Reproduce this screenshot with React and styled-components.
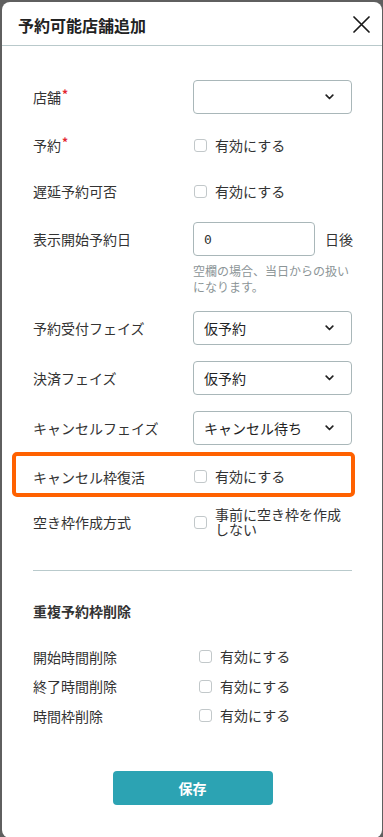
import React from "react";
import styled, { createGlobalStyle } from "styled-components";

const GlobalStyle = createGlobalStyle`
  html, body {
    margin: 0;
    padding: 0;
    background: #5f5f5f;
  }
  body {
    font-family: "Noto Sans CJK JP", "Noto Sans", sans-serif;
    color: #333;
  }
  * {
    box-sizing: border-box;
  }
`;

const Modal = styled.div`
  margin: 2px 0 0 2px;
  width: 380px;
  height: 836px;
  background: #fff;
  border-radius: 8px;
  overflow: hidden;
`;

const Header = styled.div`
  height: 44px;
  display: flex;
  align-items: center;
  justify-content: space-between;
  padding: 2px 12px 0 16px;
  border-bottom: 1px solid #b9c9cb;
`;

const Title = styled.h1`
  margin: 0;
  font-size: 16px;
  font-weight: 700;
  color: #222;
`;

const CloseButton = styled.button`
  border: none;
  background: none;
  padding: 0;
  width: 18px;
  height: 18px;
  display: flex;
  align-items: center;
  justify-content: center;
  cursor: pointer;
`;

const Body = styled.div`
  padding: 26px 30px 0 31px;
  display: flex;
  flex-direction: column;
`;

const Row = styled.div`
  display: grid;
  grid-template-columns: ${(p) => p.$labelWidth || 160}px 1fr;
  align-items: ${(p) => (p.$top ? "start" : "center")};
  min-height: 46px;
  padding: ${(p) => (p.$padTop ? `${p.$padTop}px 0 8px` : "8px 0")};
`;

const HighlightRow = styled(Row)`
  margin: -1px -3px 0 -21px;
  border: 4px solid #ff6100;
  border-radius: 5px;
  padding: 4px 0 0 17px;
  min-height: 45px;
`;

const CompactRow = styled(Row)`
  min-height: 29.5px;
  padding: 0;
`;

const Label = styled.div`
  font-size: 14px;
  line-height: ${(p) => (p.$tall ? "34px" : "20px")};
  color: #333;
`;

const Required = styled.span`
  color: #e3262f;
  font-size: 12px;
  font-weight: 700;
  vertical-align: top;
  line-height: 14px;
  margin-left: 1px;
`;

const SelectBox = styled.div`
  height: 34px;
  width: 159px;
  border: 1px solid #a9b7b9;
  border-radius: 4px;
  display: flex;
  align-items: center;
  justify-content: space-between;
  padding: 0 17px 0 10px;
  font-size: 14px;
  color: #222;
`;

const CheckLabel = styled.label`
  display: flex;
  align-items: center;
  gap: 8px;
  font-size: 14px;
  line-height: 15px;
  color: #333;
  padding-left: 1px;
`;

const Box = styled.span`
  flex: none;
  width: 13px;
  height: 13px;
  border: 1px solid #c2c8ca;
  border-radius: 3px;
  background: #fff;
`;

const InputLine = styled.div`
  display: flex;
  align-items: center;
  gap: 10px;
`;

const TextInput = styled.div`
  flex: none;
  width: 122px;
  height: 34px;
  border: 1px solid #a9b7b9;
  border-radius: 4px;
  display: flex;
  align-items: center;
  padding-left: 10px;
  font-family: "DejaVu Sans Mono", "Liberation Mono", monospace;
  font-size: 13px;
  color: #333;
`;

const Unit = styled.span`
  font-size: 14px;
  color: #333;
  white-space: nowrap;
`;

const Help = styled.div`
  margin-top: 7px;
  font-size: 12px;
  line-height: 16px;
  color: #8c9597;
`;

const Divider = styled.hr`
  border: none;
  border-top: 1px solid #b9cacc;
  margin: 25px 0 0;
`;

const SectionTitle = styled.h2`
  margin: 30px 0 21px;
  font-size: 14px;
  line-height: 20px;
  font-weight: 700;
  color: #333;
`;

const SaveButton = styled.button`
  margin: 40px auto 0;
  width: 160px;
  height: 34px;
  border: none;
  border-radius: 4px;
  background: #2ca3b3;
  color: #fff;
  font-family: inherit;
  font-size: 14px;
  font-weight: 700;
`;

const Chevron = () => (
  <svg width="9" height="6" viewBox="0 0 9 6">
    <path d="M1.2 1.2 4.5 4.5l3.3-3.3" fill="none" stroke="#222" strokeWidth="1.7" strokeLinecap="round" strokeLinejoin="round" />
  </svg>
);

const CloseIcon = () => (
  <svg width="17" height="17" viewBox="0 0 17 17">
    <path d="M1 1l15 15M16 1 1 16" stroke="#1a1a1a" strokeWidth="1.7" strokeLinecap="round" />
  </svg>
);

const Select = ({ value }) => (
  <SelectBox>
    <span>{value}</span>
    <Chevron />
  </SelectBox>
);

const Check = ({ children }) => (
  <CheckLabel>
    <Box />
    <span>{children}</span>
  </CheckLabel>
);

const App = () => {
  return (
    <>
      <GlobalStyle />
      <Modal>
        <Header>
          <Title>予約可能店舗追加</Title>
          <CloseButton aria-label="close">
            <CloseIcon />
          </CloseButton>
        </Header>
        <Body>
          <Row>
            <Label>
              店舗<Required>*</Required>
            </Label>
            <Select value="" />
          </Row>
          <Row>
            <Label>
              予約<Required>*</Required>
            </Label>
            <Check>有効にする</Check>
          </Row>
          <Row>
            <Label>遅延予約可否</Label>
            <Check>有効にする</Check>
          </Row>
          <Row $top>
            <Label $tall>表示開始予約日</Label>
            <div>
              <InputLine>
                <TextInput>0</TextInput>
                <Unit>日後</Unit>
              </InputLine>
              <Help>
                空欄の場合、当日からの扱い
                <br />
                になります。
              </Help>
            </div>
          </Row>
          <Row>
            <Label>予約受付フェイズ</Label>
            <Select value="仮予約" />
          </Row>
          <Row>
            <Label>決済フェイズ</Label>
            <Select value="仮予約" />
          </Row>
          <Row>
            <Label>キャンセルフェイズ</Label>
            <Select value="キャンセル待ち" />
          </Row>
          <HighlightRow>
            <Label>キャンセル枠復活</Label>
            <Check>有効にする</Check>
          </HighlightRow>
          <Row $padTop={10}>
            <Label>空き枠作成方式</Label>
            <Check>事前に空き枠を作成しない</Check>
          </Row>
          <Divider />
          <SectionTitle>重複予約枠削除</SectionTitle>
          <CompactRow $labelWidth={165}>
            <Label>開始時間削除</Label>
            <Check>有効にする</Check>
          </CompactRow>
          <CompactRow $labelWidth={165}>
            <Label>終了時間削除</Label>
            <Check>有効にする</Check>
          </CompactRow>
          <CompactRow $labelWidth={165}>
            <Label>時間枠削除</Label>
            <Check>有効にする</Check>
          </CompactRow>
          <SaveButton>保存</SaveButton>
        </Body>
      </Modal>
    </>
  );
};

export default App;
